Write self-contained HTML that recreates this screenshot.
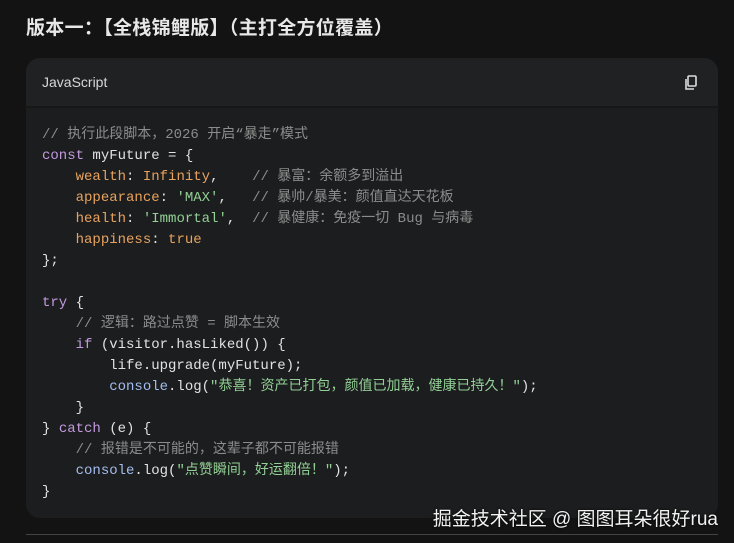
<!DOCTYPE html>
<html><head><meta charset="utf-8"><style>
body{margin:0;background:#131313;width:734px;height:543px;overflow:hidden;font-family:"Liberation Sans","Noto Sans CJK SC",sans-serif;position:relative}
h2{position:absolute;left:26px;top:13px;margin:0;font-size:19px;font-weight:bold;color:#e8e8e8;letter-spacing:0.3px}
.card{position:absolute;left:26px;top:58px;width:692px;height:460px;border-radius:14px;background:#1c1d1e;overflow:hidden}
.hd{height:48px;background:#202122;border-bottom:2px solid #171717;position:relative}
.hd span{position:absolute;left:16px;top:16px;font-size:14px;color:#d8d8d8}
.cp{position:absolute;right:20px;top:17px}
pre{margin:0;position:absolute;left:16px;top:67px;font-family:"Liberation Mono","Noto Sans CJK SC",monospace;font-size:14px;line-height:21px;color:#e2e2e2}
.c{color:#8c8c8c}.k{color:#c39ade}.p{color:#e8a35f}.s{color:#92d095}.b{color:#a4bdf0}
.wm{position:absolute;right:16px;top:504px;font-size:19px;color:#f2f2f2;text-shadow:0 0 2px #000}
.ln{position:absolute;left:26px;top:534px;width:692px;height:1px;background:#444}
</style></head><body>
<h2>版本一：【全栈锦鲤版】（主打全方位覆盖）</h2>
<div class="card"><div class="hd"><span>JavaScript</span>
<svg class="cp" width="14" height="16" viewBox="0 0 14 16"><rect x="4" y="1" width="8" height="10" rx="1" fill="none" stroke="#ddd" stroke-width="1.6"/><path d="M2 4v10h8" fill="none" stroke="#ddd" stroke-width="1.6"/></svg></div>
<pre><span class="c">// 执行此段脚本，2026 开启“暴走”模式</span>
<span class="k">const</span> myFuture = {
    <span class="p">wealth</span>: <span class="p">Infinity</span>,    <span class="c">// 暴富：余额多到溢出</span>
    <span class="p">appearance</span>: <span class="s">'MAX'</span>,   <span class="c">// 暴帅/暴美：颜值直达天花板</span>
    <span class="p">health</span>: <span class="s">'Immortal'</span>,  <span class="c">// 暴健康：免疫一切 Bug 与病毒</span>
    <span class="p">happiness</span>: <span class="p">true</span>
};

<span class="k">try</span> {
    <span class="c">// 逻辑：路过点赞 = 脚本生效</span>
    <span class="k">if</span> (visitor.hasLiked()) {
        life.upgrade(myFuture);
        <span class="b">console</span>.log(<span class="s">"恭喜！资产已打包，颜值已加载，健康已持久！"</span>);
    }
} <span class="k">catch</span> (e) {
    <span class="c">// 报错是不可能的，这辈子都不可能报错</span>
    <span class="b">console</span>.log(<span class="s">"点赞瞬间，好运翻倍！"</span>);
}</pre></div>
<div class="wm">掘金技术社区 @ 图图耳朵很好rua</div>
<div class="ln"></div>
</body></html>
